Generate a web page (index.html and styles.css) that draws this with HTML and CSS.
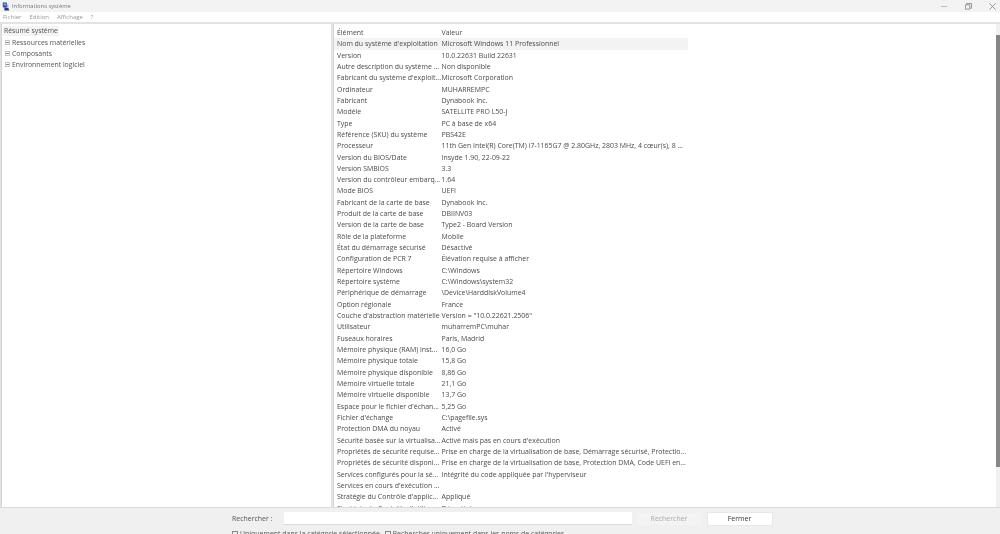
FILE: index.html
```html
<!DOCTYPE html>
<html lang="fr">
<head>
<meta charset="utf-8">
<title>Informations système</title>
<link rel="stylesheet" href="styles.css">
</head>
<body>
<div class="window">
  <header class="titlebar">
    <svg class="app-icon" viewBox="0 0 10 10"><rect x="1" y="0" width="5" height="6" fill="#2b3f9e"/><rect x="2" y="1" width="3" height="3" fill="#7f9be0"/><path d="M3 6l5 1 1 3H3z" fill="#26348a"/><rect x="6" y="3" width="2" height="3" fill="#9aa4c8"/></svg>
    <span class="title">Informations système</span>
    <div class="controls">
      <svg viewBox="0 0 8 8"><path d="M0 4h7" stroke="#b5b5b5" fill="none"/></svg>
      <svg viewBox="0 0 8 8"><path d="M.5 2h5v5h-5zM2 2V.5h5.5V6H6" stroke="#8a8a8a" fill="none"/></svg>
      <svg viewBox="0 0 8 8"><path d="M.5.5l7 7M7.500.5l-7 7" stroke="#8a8a8a" fill="none"/></svg>
    </div>
  </header>
  <nav class="menubar"><span>Fichier</span><span>Edition</span><span>Affichage</span><span>?</span></nav>
  <main class="panes">
    <aside class="tree">
      <div class="tree-root"><span>Résumé système</span></div>
      <div class="tree-item"><i class="plus"></i>Ressources matérielles</div>
      <div class="tree-item"><i class="plus"></i>Composants</div>
      <div class="tree-item"><i class="plus"></i>Environnement logiciel</div>
    </aside>
    <section class="details">
      <div class="list">
        <div class="row"><span>Élément</span><span>Valeur</span></div>
        <div class="row selected"><span>Nom du système d'exploitation</span><span>Microsoft Windows 11 Professionnel</span></div>
        <div class="row"><span>Version</span><span>10.0.22631 Build 22631</span></div>
        <div class="row"><span>Autre description du système ...</span><span>Non disponible</span></div>
        <div class="row"><span>Fabricant du système d'exploit...</span><span>Microsoft Corporation</span></div>
        <div class="row"><span>Ordinateur</span><span>MUHARREMPC</span></div>
        <div class="row"><span>Fabricant</span><span>Dynabook Inc.</span></div>
        <div class="row"><span>Modèle</span><span>SATELLITE PRO L50-J</span></div>
        <div class="row"><span>Type</span><span>PC à base de x64</span></div>
        <div class="row"><span>Référence (SKU) du système</span><span>PBS42E</span></div>
        <div class="row"><span>Processeur</span><span>11th Gen Intel(R) Core(TM) i7-1165G7 @ 2.80GHz, 2803 MHz, 4 cœur(s), 8 ...</span></div>
        <div class="row"><span>Version du BIOS/Date</span><span>Insyde 1.90, 22-09-22</span></div>
        <div class="row"><span>Version SMBIOS</span><span>3.3</span></div>
        <div class="row"><span>Version du contrôleur embarq...</span><span>1.64</span></div>
        <div class="row"><span>Mode BIOS</span><span>UEFI</span></div>
        <div class="row"><span>Fabricant de la carte de base</span><span>Dynabook Inc.</span></div>
        <div class="row"><span>Produit de la carte de base</span><span>DBIINV03</span></div>
        <div class="row"><span>Version de la carte de base</span><span>Type2 - Board Version</span></div>
        <div class="row"><span>Rôle de la plateforme</span><span>Mobile</span></div>
        <div class="row"><span>État du démarrage sécurisé</span><span>Désactivé</span></div>
        <div class="row"><span>Configuration de PCR 7</span><span>Élévation requise à afficher</span></div>
        <div class="row"><span>Répertoire Windows</span><span>C:\Windows</span></div>
        <div class="row"><span>Répertoire système</span><span>C:\Windows\system32</span></div>
        <div class="row"><span>Périphérique de démarrage</span><span>\Device\HarddiskVolume4</span></div>
        <div class="row"><span>Option régionale</span><span>France</span></div>
        <div class="row"><span>Couche d'abstraction matérielle</span><span>Version = "10.0.22621.2506"</span></div>
        <div class="row"><span>Utilisateur</span><span>muharremPC\muhar</span></div>
        <div class="row"><span>Fuseaux horaires</span><span>Paris, Madrid</span></div>
        <div class="row"><span>Mémoire physique (RAM) inst...</span><span>16,0 Go</span></div>
        <div class="row"><span>Mémoire physique totale</span><span>15,8 Go</span></div>
        <div class="row"><span>Mémoire physique disponible</span><span>8,86 Go</span></div>
        <div class="row"><span>Mémoire virtuelle totale</span><span>21,1 Go</span></div>
        <div class="row"><span>Mémoire virtuelle disponible</span><span>13,7 Go</span></div>
        <div class="row"><span>Espace pour le fichier d'échan...</span><span>5,25 Go</span></div>
        <div class="row"><span>Fichier d'échange</span><span>C:\pagefile.sys</span></div>
        <div class="row"><span>Protection DMA du noyau</span><span>Activé</span></div>
        <div class="row"><span>Sécurité basée sur la virtualisa...</span><span>Activé mais pas en cours d'exécution</span></div>
        <div class="row"><span>Propriétés de sécurité requise...</span><span>Prise en charge de la virtualisation de base, Démarrage sécurisé, Protectio...</span></div>
        <div class="row"><span>Propriétés de sécurité disponi...</span><span>Prise en charge de la virtualisation de base, Protection DMA, Code UEFI en...</span></div>
        <div class="row"><span>Services configurés pour la sé...</span><span>Intégrité du code appliquée par l'hyperviseur</span></div>
        <div class="row"><span>Services en cours d'exécution ...</span><span></span></div>
        <div class="row"><span>Stratégie du Contrôle d'applic...</span><span>Appliqué</span></div>
        <div class="row"><span>Stratégie du Contrôle d'utilis...</span><span>Désactivé</span></div>
      </div>
      <div class="scrollbar"><div class="thumb"></div></div>
    </section>
  </main>
  <footer class="searchbar">
    <div class="search-line">
      <label class="search-label">Rechercher :</label>
      <div class="search-input"></div>
      <button class="btn disabled">Rechercher</button>
      <button class="btn">Fermer</button>
    </div>
    <div class="check-line">
      <span class="check"><i></i>Uniquement dans la catégorie sélectionnée</span>
      <span class="check"><i></i>Rechercher uniquement dans les noms de catégories</span>
    </div>
  </footer>
</div>
</body>
</html>
```

FILE: styles.css
```css
* { box-sizing: border-box; }
html, body { margin: 0; padding: 0; background: #f0f0f0; }
body { width: 1000px; height: 534px; overflow: hidden; }
.window {
  width: 1000px; height: 534px; display: flex; flex-direction: column; overflow: hidden;
  font-family: "Open Sans", "Noto Sans", sans-serif; font-size: 6.95px; color: #444;
  filter: blur(0.3px);
}
.titlebar { height: 12px; flex: none; background: #f3f3f3; display: flex; align-items: center; }
.app-icon { width: 8px; height: 9px; margin-left: 2px; }
.title { margin-left: 2px; color: #777; font-size: 5.8px; }
.controls { margin-left: auto; display: flex; gap: 17px; padding-right: 4px; }
.controls svg { width: 7px; height: 7px; display: block; }
.menubar { height: 10px; flex: none; background: #fff; display: flex; align-items: center; gap: 8px; padding-left: 3px; color: #999; font-size: 6px; }
.panes { height: 485px; flex: none; display: flex; background: #e3e3e3; padding-top: 2px; gap: 2px; overflow: hidden; }
.tree { width: 330px; margin-left: 1px; background: #fff; border-left: 1px solid #d5d5d5; padding-top: 1.500px; flex: none; font-size: 6.85px; }
.tree-root { height: 11px; display: flex; align-items: center; padding-left: 1px; }
.tree-root span { background: #f3f3f3; padding: 0 1px; height: 10px; line-height: 10px; color: #555; }
.tree-item { height: 11px; display: flex; align-items: center; padding-left: 3px; color: #555; }
.plus {
  width: 5px; height: 5px; margin-right: 2px; flex: none; border: 1px solid #c4c4c4;
  background: linear-gradient(#8f8f8f, #8f8f8f) center / 3px 1px no-repeat;
}
.details { flex: 1; min-width: 0; background: #fff; display: flex; overflow: hidden; border-left: 1px solid #d5d5d5; }
.list { width: 354px; padding-top: 2.900px; flex: none; }
.row { height: 11.34px; display: grid; grid-template-columns: 104.5px 1fr; align-items: center; white-space: nowrap; line-height: 11.34px; padding-left: 3px; color: #4a4a4a; }
.row.selected { background: #f3f3f3; }
.scrollbar { margin-left: auto; width: 4.500px; flex: none; background: #f0f0f0; padding-top: 11px; }
.thumb { height: 432px; background: #868686; }
.searchbar { flex: 1; min-height: 0; background: #f0f0f0; border-top: 1px solid #dcdcdc; padding-left: 232px; overflow: hidden; }
.search-line { display: flex; align-items: center; height: 18px; margin-top: 1.500px; }
.search-label { width: 52px; color: #555; }
.search-input { width: 348px; height: 13px; background: #fff; border-bottom: 1px solid #dadada; }
.btn { width: 66px; height: 14px; margin-left: 4px; padding: 0; border: 1px solid #e8e8e8; background: #fff; font: inherit; color: #333; }
.btn.disabled { background: #f3f3f3; color: #aaa; border-color: #f0f0f0; }
.btn:last-child { margin-left: 4.500px; }
.check-line { display: flex; gap: 5px; height: 12px; line-height: 10px; color: #555; white-space: nowrap; }
.check { display: flex; align-items: center; }
.check i { width: 6px; height: 6px; border: 1px solid #888; margin-right: 2px; flex: none; }
```
